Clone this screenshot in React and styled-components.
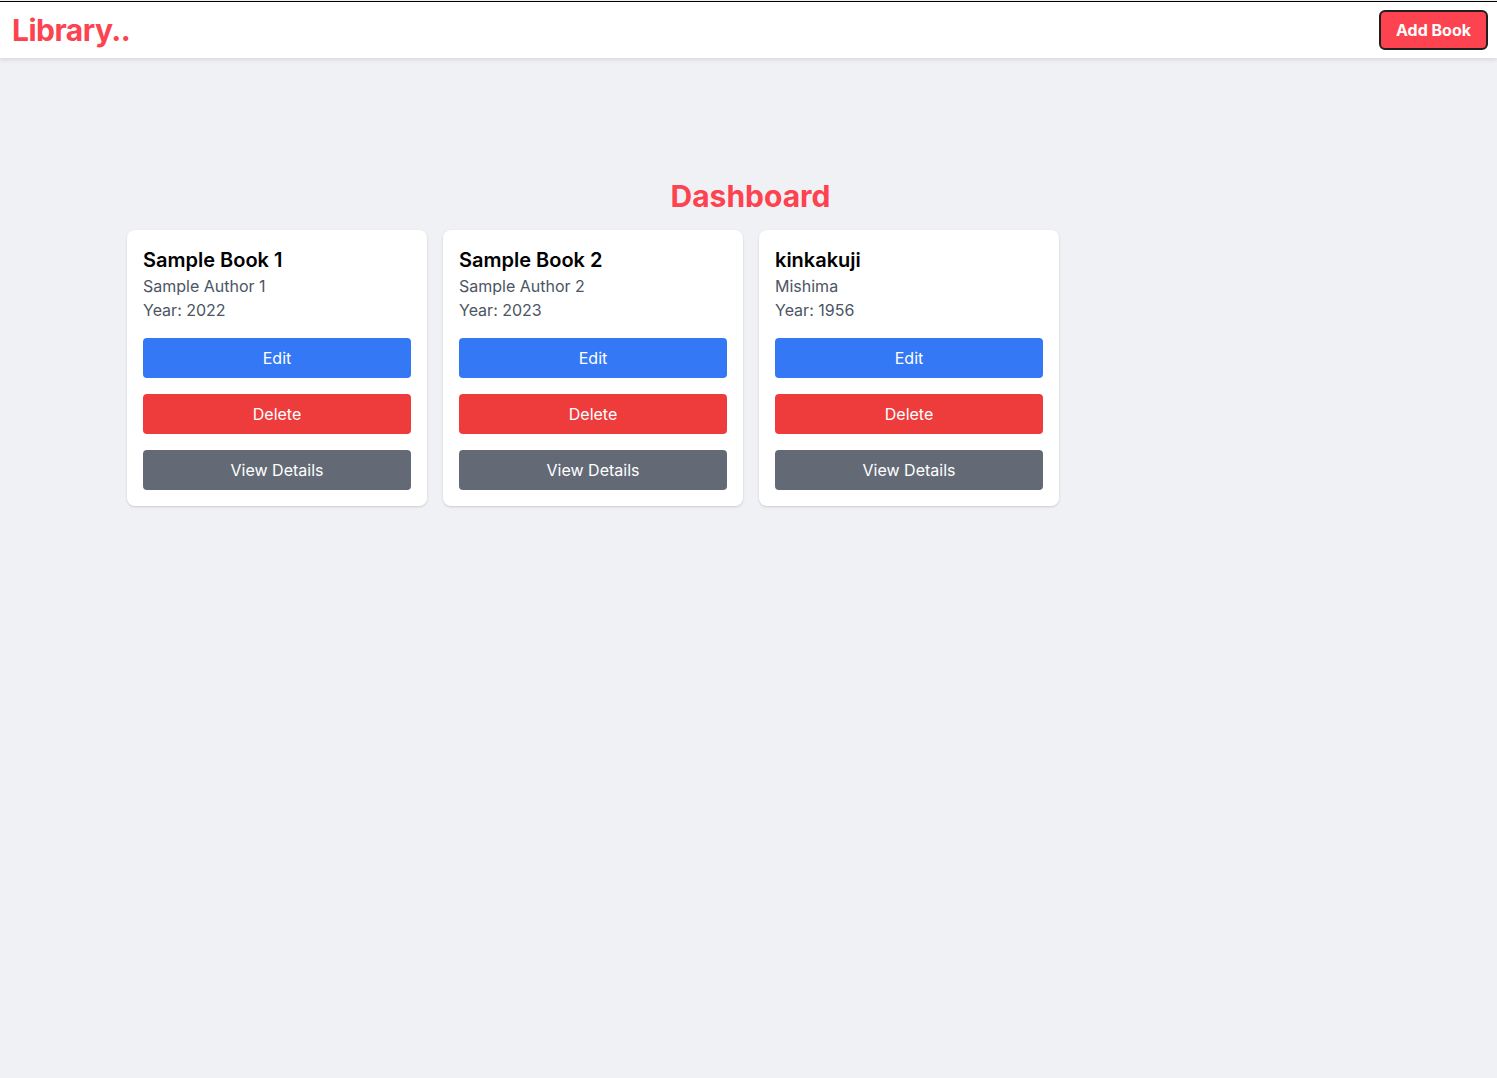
import styled, { createGlobalStyle } from 'styled-components';

const GlobalStyle = createGlobalStyle`
    html, body {
        margin: 0;
        padding: 0;
        background-color: #f0f1f5;
        font-family: Inter, "Noto Sans", sans-serif;
    }
    * {
        box-sizing: border-box;
    }
`;

const Page = styled.div`
    min-height: 1078px;
    background-color: #f0f1f5;
    border-top: 1px solid #000;
    margin-top: 1px;
`;

const Navbar = styled.header`
    height: 56px;
    background-color: #fff;
    display: flex;
    align-items: center;
    justify-content: space-between;
    padding: 0 9px 0 12px;
    box-shadow: 0 2px 4px rgba(0, 0, 0, 0.1);
`;

const Logo = styled.h1`
    margin: 0;
    font-size: 30px;
    font-weight: 700;
    color: #fd434f;
    letter-spacing: -0.5px;
`;

const AddButton = styled.button`
    height: 40px;
    padding: 0 15px;
    background-color: #fd434f;
    color: #fff;
    border: 2px solid #1f1f1f;
    border-radius: 6px;
    font-family: inherit;
    font-size: 16px;
    font-weight: 700;
    cursor: pointer;
`;

const Main = styled.main`
    padding: 120px 127px 0;
`;

const Title = styled.h2`
    margin: 0 0 16px;
    padding-left: 4px;
    text-align: center;
    font-size: 30px;
    line-height: 36px;
    font-weight: 700;
    color: #fd434f;
`;

const Grid = styled.div`
    display: grid;
    grid-template-columns: repeat(auto-fill, 300px);
    gap: 16px;
`;

const Card = styled.div`
    background-color: #fff;
    border-radius: 8px;
    padding: 16px;
    box-shadow: 0 1px 3px rgba(0, 0, 0, 0.1), 0 1px 2px rgba(0, 0, 0, 0.06);
`;

const BookTitle = styled.h3`
    margin: 0;
    font-size: 20px;
    line-height: 28px;
    font-weight: 600;
    color: #000;
`;

const Meta = styled.p`
    margin: 0;
    font-size: 16px;
    line-height: 24px;
    color: #4b5563;
`;

const Actions = styled.div`
    display: flex;
    flex-direction: column;
    gap: 16px;
    margin-top: 16px;
`;

const colors = {
    edit: '#3478f6',
    delete: '#ee3c3c',
    view: '#636a76',
};

const ActionButton = styled.button`
    height: 40px;
    width: 100%;
    border: none;
    border-radius: 4px;
    background-color: ${(p) => colors[p.$variant]};
    color: #fff;
    font-family: inherit;
    font-size: 16px;
    cursor: pointer;
`;

const books = [
    { title: 'Sample Book 1', author: 'Sample Author 1', year: 2022 },
    { title: 'Sample Book 2', author: 'Sample Author 2', year: 2023 },
    { title: 'kinkakuji', author: 'Mishima', year: 1956 },
];

function BookCard({ book }) {
    return (
        <Card>
            <BookTitle>{book.title}</BookTitle>
            <Meta>{book.author}</Meta>
            <Meta>Year: {book.year}</Meta>
            <Actions>
                <ActionButton $variant="edit">Edit</ActionButton>
                <ActionButton $variant="delete">Delete</ActionButton>
                <ActionButton $variant="view">View Details</ActionButton>
            </Actions>
        </Card>
    );
}

export default function App() {
    return (
        <>
            <GlobalStyle />
            <Page>
                <Navbar>
                    <Logo>Library..</Logo>
                    <AddButton>Add Book</AddButton>
                </Navbar>
                <Main>
                    <Title>Dashboard</Title>
                    <Grid>
                        {books.map((book, index) => (
                            <BookCard key={index} book={book} />
                        ))}
                    </Grid>
                </Main>
            </Page>
        </>
    );
}
